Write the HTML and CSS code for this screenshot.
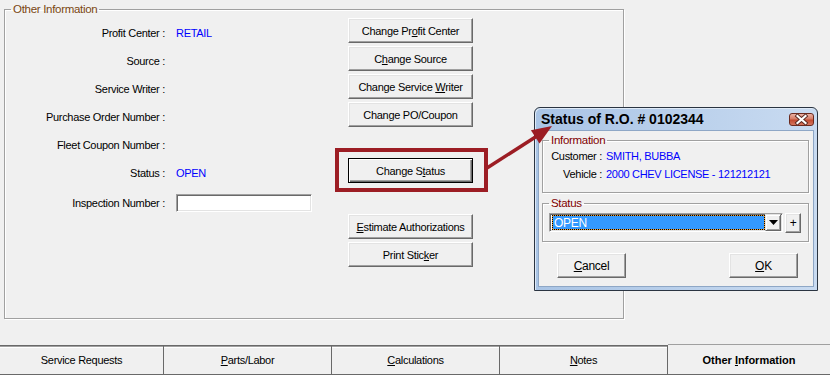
FILE: index.html
```html
<!DOCTYPE html>
<html>
<head>
<meta charset="utf-8">
<title>Other Information</title>
<link rel="stylesheet" href="styles.css">
</head>
<body>
<div class="screen">
  <div class="workspace">
    <fieldset class="group">
      <legend class="group-legend">Other Information</legend>
      <div class="group-body">
        <div class="form">
          <span class="lbl">Profit Center :</span><span class="val">RETAIL</span>
          <span class="lbl">Source :</span><span class="val"></span>
          <span class="lbl">Service Writer :</span><span class="val"></span>
          <span class="lbl">Purchase Order Number :</span><span class="val"></span>
          <span class="lbl">Fleet Coupon Number :</span><span class="val"></span>
          <span class="lbl">Status :</span><span class="val">OPEN</span>
          <span class="lbl">Inspection Number :</span><input class="text-input" type="text">
        </div>
        <div class="actions">
          <button class="btn">Change Pr<u>o</u>fit Center</button>
          <button class="btn">C<u>h</u>ange Source</button>
          <button class="btn">Change Service <u>W</u>riter</button>
          <button class="btn">Chan<u>g</u>e PO/Coupon</button>
          <button class="btn btn-default btn-callout btn-spaced">Change S<u>t</u>atus</button>
          <button class="btn btn-spaced"><u>E</u>stimate Authorizations</button>
          <button class="btn">Print Stic<u>k</u>er</button>
        </div>
      </div>
    </fieldset>
  </div>
  <div class="tabs">
    <div class="tab tab-1"><span>Service Requests</span></div>
    <div class="tab tab-2"><span><u>P</u>arts/Labor</span></div>
    <div class="tab tab-2"><span><u>C</u>alculations</span></div>
    <div class="tab tab-2"><span><u>N</u>otes</span></div>
    <div class="tab tab-active"><span>Other <u>I</u>nformation</span></div>
  </div>

  <div class="dialog">
    <div class="titlebar">
      <span class="title">Status of R.O. # 0102344</span>
      <span class="close-btn">
        <svg width="25" height="13" viewBox="0 0 25 13">
          <path d="M8.5 3 L16.5 10 M16.5 3 L8.5 10" stroke="#5a2a22" stroke-width="4" stroke-linecap="square"/>
          <path d="M8.5 3 L16.5 10 M16.5 3 L8.5 10" stroke="#ffffff" stroke-width="2.2" stroke-linecap="square"/>
        </svg>
      </span>
    </div>
    <div class="client">
      <fieldset class="dgroup info">
        <legend class="dlegend">Information</legend>
        <div class="info-grid">
          <span class="lbl">Customer :</span><span class="val">SMITH, BUBBA</span>
          <span class="lbl">Vehicle :</span><span class="val">2000 CHEV LICENSE - 121212121</span>
        </div>
      </fieldset>
      <fieldset class="dgroup status">
        <legend class="dlegend">Status</legend>
        <div class="combo-row">
          <div class="combo">
            <div class="combo-field"><span class="combo-text">OPEN</span></div>
            <div class="combo-drop">
              <svg width="9" height="5" viewBox="0 0 9 5"><path d="M0 0 H9 L4.5 5 Z" fill="#000"/></svg>
            </div>
          </div>
          <button class="btn btn-plus">+</button>
        </div>
      </fieldset>
      <div class="dialog-buttons">
        <button class="btn btn-dlg"><u>C</u>ancel</button>
        <button class="btn btn-dlg"><u>O</u>K</button>
      </div>
    </div>
  </div>

  <svg class="arrow" width="830" height="375" viewBox="0 0 830 375">
    <line x1="487" y1="168" x2="537" y2="136" stroke="#9c1d24" stroke-width="3.5"/>
    <polygon points="552,126 539.5,143.6 530.9,130.2" fill="#9c1d24"/>
  </svg>
</div>
</body>
</html>
```

FILE: styles.css
```css
html, body {
  margin: 0;
  padding: 0;
  background: #f0f0f0;
}

body {
  font-family: "Liberation Sans", Arial, sans-serif;
  font-size: 11px;
  letter-spacing: -0.3px;
  color: #000;
}

.screen {
  position: relative;
  width: 830px;
  height: 375px;
  overflow: hidden;
  display: flex;
  flex-direction: column;
}

.workspace {
  height: 345px;
  box-sizing: border-box;
  padding-left: 4px;
}

.group {
  box-sizing: border-box;
  margin: 2px 0 0 0;
  width: 620px;
  height: 317px;
  padding: 0;
  min-width: 0;
  border: 1px solid #a0a0a0;
  box-shadow: 1px 1px 0 #ffffff, inset 1px 1px 0 #ffffff;
}

.group-legend {
  margin-left: 6px;
  padding: 0 2px;
  line-height: 14px;
  color: #7a4610;
  font-size: 11.5px;
}

.group-body {
  display: flex;
}

.form {
  display: grid;
  grid-template-columns: 160px 136px;
  grid-template-rows: repeat(6, 28px) 32px;
  column-gap: 11px;
  align-items: center;
  padding-top: 3px;
}

.lbl {
  text-align: right;
  white-space: nowrap;
}

.val {
  color: #0000ff;
  white-space: nowrap;
}

.text-input {
  box-sizing: border-box;
  width: 136px;
  height: 18px;
  margin: 0;
  padding: 0;
  background: #fff;
  border: 1px solid;
  border-color: #a0a0a0 #ffffff #ffffff #a0a0a0;
  box-shadow: inset 1px 1px 0 #696969, inset -1px -1px 0 #e3e3e3;
}

.actions {
  display: flex;
  flex-direction: column;
  gap: 3px;
  margin-left: 36px;
  padding-top: 2px;
}

.btn {
  box-sizing: border-box;
  width: 125px;
  height: 25px;
  margin: 0;
  padding: 0;
  font-family: inherit;
  font-size: 11px;
  letter-spacing: -0.3px;
  color: #000;
  background: #f0f0f0;
  border: 1px solid;
  border-color: #ffffff #696969 #696969 #ffffff;
  box-shadow: inset -1px -1px 0 #a0a0a0, inset 1px 1px 0 #e3e3e3;
  text-align: center;
}

.btn u {
  text-decoration-thickness: 1px;
  text-underline-offset: 1px;
}

.btn-spaced {
  margin-top: 28px;
}

.btn-default {
  border: 1px solid #000;
  box-shadow: inset 1px 1px 0 #ffffff, inset -1px -1px 0 #696969, inset -2px -2px 0 #a0a0a0;
}

.btn-callout {
  position: relative;
}

.btn-callout::after {
  content: "";
  position: absolute;
  left: -14px;
  right: -16px;
  top: -11px;
  bottom: -10px;
  border: 4px solid #9c1d24;
}

/* tabs */
.tabs {
  display: flex;
  height: 30px;
}

.tab {
  box-sizing: border-box;
  height: 30px;
  display: flex;
  align-items: center;
  justify-content: center;
  border-top: 1px solid #696969;
  border-right: 1px solid #696969;
  border-bottom: 1px solid #696969;
  box-shadow: inset 0 1px 0 #a0a0a0, inset 0 2px 0 #ffffff;
  background: #f0f0f0;
  white-space: nowrap;
}

.tab-1 { width: 164px; }
.tab-2 { width: 168px; }

.tab-active {
  flex: 1;
  height: 31px;
  margin-top: -1px;
  border-top: 1px solid #a0a0a0;
  border-right: none;
  box-shadow: none;
  font-weight: bold;
  letter-spacing: 0;
}

/* dialog */
.dialog {
  position: absolute;
  left: 534px;
  top: 107px;
  width: 284px;
  height: 184px;
  box-sizing: border-box;
  border: 1px solid #2a3441;
  border-radius: 6px 6px 0 0;
  background: linear-gradient(to right, #a9c4e5, #c9dbf1);
  padding: 0 3px 3px 3px;
  display: flex;
  flex-direction: column;
  box-shadow: inset 1px 1px 0 #dfeaf7;
}

.titlebar {
  height: 22px;
  display: flex;
  justify-content: space-between;
  align-items: flex-start;
  padding-left: 3px;
}

.title {
  font-size: 14px;
  font-weight: bold;
  letter-spacing: 0;
  line-height: 22px;
}

.close-btn {
  display: block;
  box-sizing: border-box;
  width: 25px;
  height: 13px;
  margin-top: 5px;
  border: 1px solid #6b2a1e;
  border-radius: 3px;
  background: linear-gradient(#eab1a4, #d77c66 45%, #c24a30 55%, #d47660);
  overflow: hidden;
}

.close-btn svg {
  display: block;
  margin: -1px;
}

.client {
  flex: 1;
  background: #f0f0f0;
  border: 1px solid #8ea7c6;
  display: flex;
  flex-direction: column;
}

.dgroup {
  box-sizing: border-box;
  margin: 0 0 0 3px;
  padding: 0;
  min-width: 0;
  width: 267px;
  border: 1px solid #a0a0a0;
  box-shadow: 1px 1px 0 #ffffff, inset 1px 1px 0 #ffffff;
}

.dlegend {
  margin-left: 6px;
  padding: 0 2px;
  line-height: 14px;
  color: #800000;
  font-size: 11.5px;
}

.info {
  margin-top: 2px;
  height: 60px;
}

.info-grid {
  display: grid;
  grid-template-columns: 59px auto;
  grid-auto-rows: 18px;
  column-gap: 4px;
  align-items: center;
}

.status {
  margin-top: 3px;
  height: 46px;
}

.combo-row {
  display: flex;
  align-items: flex-start;
  gap: 2px;
  margin: 3px 0 0 6px;
}

.combo {
  box-sizing: border-box;
  width: 234px;
  height: 19px;
  display: flex;
  align-items: center;
  border: 1px solid;
  border-color: #a0a0a0 #ffffff #ffffff #a0a0a0;
  box-shadow: inset 1px 1px 0 #696969, inset -1px -1px 0 #e3e3e3;
  background: #fff;
  padding: 1px;
}

.combo-field {
  box-sizing: border-box;
  flex: 1;
  height: 15px;
  margin-left: 1px;
  border: 1px dotted #000;
  background: linear-gradient(#3399ff, #3399ff) padding-box, #f4a030 border-box;
  display: flex;
  align-items: center;
}

.combo-text {
  color: #fff;
  padding-left: 1px;
  font-size: 12px;
}

.combo-drop {
  box-sizing: border-box;
  width: 16px;
  height: 17px;
  background: #f0f0f0;
  border: 1px solid;
  border-color: #e3e3e3 #696969 #696969 #e3e3e3;
  box-shadow: inset 1px 1px 0 #ffffff, inset -1px -1px 0 #a0a0a0;
  display: flex;
  align-items: center;
  justify-content: center;
}

.combo-drop svg {
  display: block;
}

.btn-plus {
  width: 16px;
  height: 20px;
  font-size: 12px;
  line-height: 1;
}

.dialog-buttons {
  display: flex;
  gap: 103px;
  margin: 11px 0 0 18px;
}

.btn-dlg {
  width: 69px;
  height: 25px;
  font-size: 12px;
}

.arrow {
  position: absolute;
  left: 0;
  top: 0;
  pointer-events: none;
}
```
